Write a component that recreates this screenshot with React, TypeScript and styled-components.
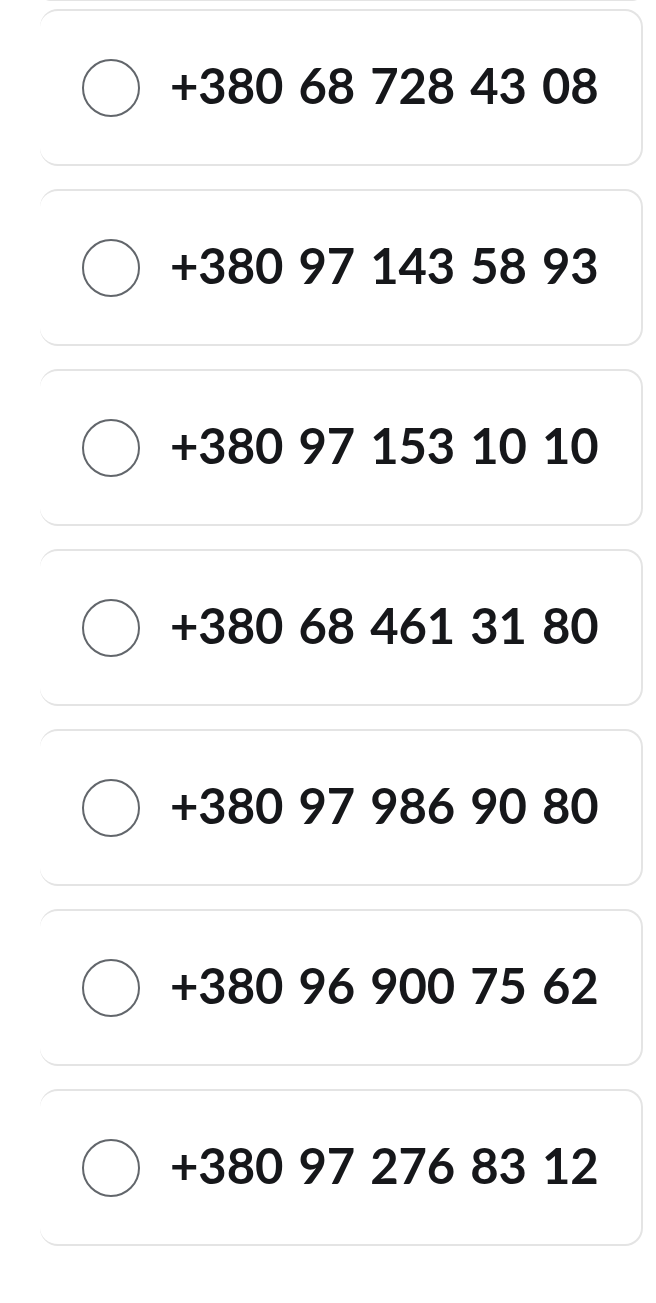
import styled, { createGlobalStyle } from "styled-components"

const GlobalStyle = createGlobalStyle`
  html, body {
    margin: 0;
    padding: 0;
    background: #ffffff;
  }
`

const Page = styled.div`
  width: 656px;
  min-height: 1303px;
  box-sizing: border-box;
  padding: 9px 13px 0 40px;
  display: flex;
  flex-direction: column;
  gap: 23px;
  background: #ffffff;
  font-family: Lato, "Noto Sans", sans-serif;
  position: relative;
  overflow: hidden;
`

const TopEdge = styled.div`
  position: absolute;
  top: -20px;
  left: 40px;
  right: 13px;
  height: 21px;
  border: 2px solid #e4e4e4;
  border-left: none;
  border-radius: 18px;
  box-sizing: border-box;
`

const Card = styled.label`
  display: flex;
  align-items: center;
  gap: 30px;
  height: 157px;
  box-sizing: border-box;
  padding-left: 42px;
  border: 2px solid #e4e4e4;
  border-left: none;
  border-radius: 18px;
  background: #ffffff;
  cursor: pointer;
`

const Radio = styled.span<{ $checked?: boolean }>`
  width: 58px;
  height: 58px;
  flex-shrink: 0;
  box-sizing: border-box;
  border-radius: 50%;
  border: 2px solid #62666b;
  background: ${(p) => (p.$checked ? "#62666b" : "transparent")};
`

const Phone = styled.span`
  font-size: 49px;
  font-weight: 700;
  color: #16171a;
  letter-spacing: -0.1px;
  word-spacing: 3.3px;
  padding-bottom: 5px;
  white-space: nowrap;
`

const phones = [
  "+380 68 728 43 08",
  "+380 97 143 58 93",
  "+380 97 153 10 10",
  "+380 68 461 31 80",
  "+380 97 986 90 80",
  "+380 96 900 75 62",
  "+380 97 276 83 12",
]

export default function App() {
  return <>
    <GlobalStyle />
    <Page>
      <TopEdge />
      {phones.map((p) =>
        <Card key={p}>
          <Radio />
          <Phone>{p}</Phone>
        </Card>
      )}
    </Page>
  </>
}
